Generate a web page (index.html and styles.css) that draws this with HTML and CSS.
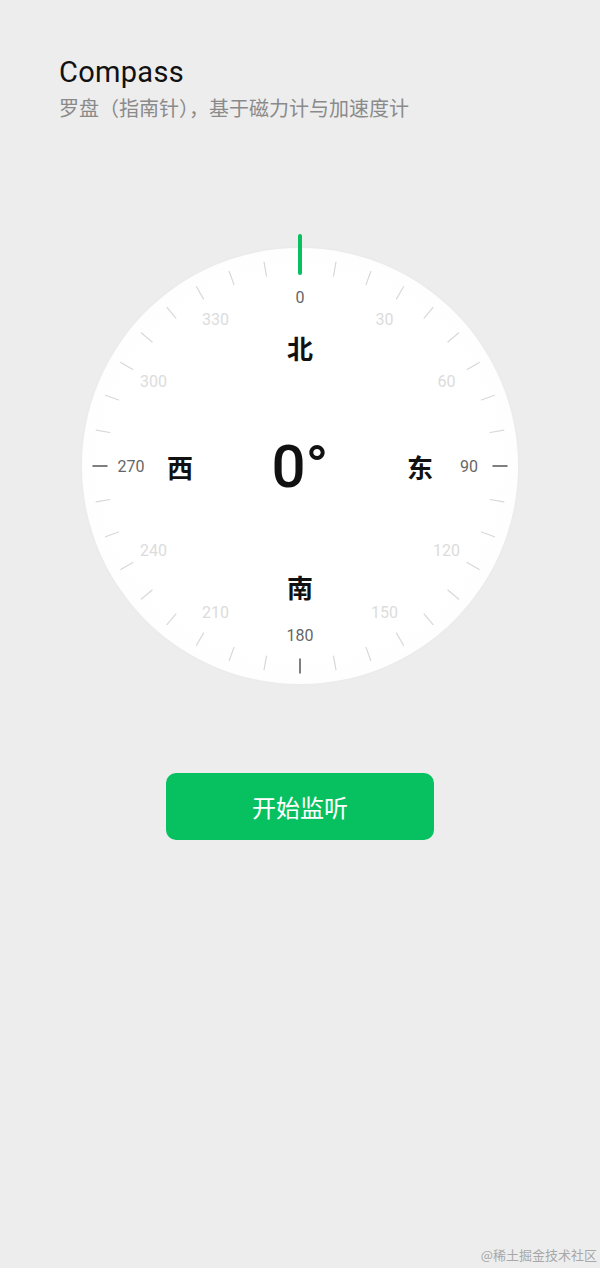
FILE: index.html
```html
<!DOCTYPE html>
<html lang="zh">
<head>
<meta charset="utf-8">
<title>Compass</title>
<link rel="stylesheet" href="styles.css">
</head>
<body>
<div class="page">
  <header class="header">
    <h1 class="title">Compass</h1>
    <p class="subtitle">罗盘（指南针），基于磁力计与加速度计</p>
  </header>
  <section class="dial-wrap">
    <div class="dial">
      <svg class="dial-svg" viewBox="-218 -218 436 436" width="436" height="436">
        <g class="ticks-minor" stroke="#d8d8d8" stroke-width="1.2" stroke-linecap="round">
          <line x1="0" y1="-193" x2="0" y2="-207" transform="rotate(10)"/>
          <line x1="0" y1="-193" x2="0" y2="-207" transform="rotate(20)"/>
          <line x1="0" y1="-193" x2="0" y2="-207" transform="rotate(30)"/>
          <line x1="0" y1="-193" x2="0" y2="-207" transform="rotate(40)"/>
          <line x1="0" y1="-193" x2="0" y2="-207" transform="rotate(50)"/>
          <line x1="0" y1="-193" x2="0" y2="-207" transform="rotate(60)"/>
          <line x1="0" y1="-193" x2="0" y2="-207" transform="rotate(70)"/>
          <line x1="0" y1="-193" x2="0" y2="-207" transform="rotate(80)"/>
          <line x1="0" y1="-193" x2="0" y2="-207" transform="rotate(100)"/>
          <line x1="0" y1="-193" x2="0" y2="-207" transform="rotate(110)"/>
          <line x1="0" y1="-193" x2="0" y2="-207" transform="rotate(120)"/>
          <line x1="0" y1="-193" x2="0" y2="-207" transform="rotate(130)"/>
          <line x1="0" y1="-193" x2="0" y2="-207" transform="rotate(140)"/>
          <line x1="0" y1="-193" x2="0" y2="-207" transform="rotate(150)"/>
          <line x1="0" y1="-193" x2="0" y2="-207" transform="rotate(160)"/>
          <line x1="0" y1="-193" x2="0" y2="-207" transform="rotate(170)"/>
          <line x1="0" y1="-193" x2="0" y2="-207" transform="rotate(190)"/>
          <line x1="0" y1="-193" x2="0" y2="-207" transform="rotate(200)"/>
          <line x1="0" y1="-193" x2="0" y2="-207" transform="rotate(210)"/>
          <line x1="0" y1="-193" x2="0" y2="-207" transform="rotate(220)"/>
          <line x1="0" y1="-193" x2="0" y2="-207" transform="rotate(230)"/>
          <line x1="0" y1="-193" x2="0" y2="-207" transform="rotate(240)"/>
          <line x1="0" y1="-193" x2="0" y2="-207" transform="rotate(250)"/>
          <line x1="0" y1="-193" x2="0" y2="-207" transform="rotate(260)"/>
          <line x1="0" y1="-193" x2="0" y2="-207" transform="rotate(280)"/>
          <line x1="0" y1="-193" x2="0" y2="-207" transform="rotate(290)"/>
          <line x1="0" y1="-193" x2="0" y2="-207" transform="rotate(300)"/>
          <line x1="0" y1="-193" x2="0" y2="-207" transform="rotate(310)"/>
          <line x1="0" y1="-193" x2="0" y2="-207" transform="rotate(320)"/>
          <line x1="0" y1="-193" x2="0" y2="-207" transform="rotate(330)"/>
          <line x1="0" y1="-193" x2="0" y2="-207" transform="rotate(340)"/>
          <line x1="0" y1="-193" x2="0" y2="-207" transform="rotate(350)"/>
        </g>
        <g class="ticks-major" stroke="#555" stroke-width="1.5" stroke-linecap="round">
          <line x1="0" y1="-193" x2="0" y2="-207" transform="rotate(90)"/>
          <line x1="0" y1="-193" x2="0" y2="-207" transform="rotate(180)"/>
          <line x1="0" y1="-193" x2="0" y2="-207" transform="rotate(270)"/>
        </g>
        <line class="needle" x1="0" y1="-230" x2="0" y2="-193"/>

        <g class="deg-minor">
          <text x="84.5" y="-146.4">30</text>
          <text x="146.4" y="-84.5">60</text>
          <text x="146.4" y="84.5">120</text>
          <text x="84.5" y="146.4">150</text>
          <text x="-84.5" y="146.4">210</text>
          <text x="-146.4" y="84.5">240</text>
          <text x="-146.4" y="-84.5">300</text>
          <text x="-84.5" y="-146.4">330</text>
        </g>
        <g class="deg-major">
          <text x="0" y="-169">0</text>
          <text x="169" y="0">90</text>
          <text x="0" y="169">180</text>
          <text x="-169" y="0">270</text>
        </g>
        <g class="cardinal">
          <text x="0" y="-119">北</text>
          <text x="120" y="0">东</text>
          <text x="0" y="120">南</text>
          <text x="-120" y="0">西</text>
        </g>
        <text class="heading" x="0" y="0">0°</text>
      </svg>
    </div>
  </section>
  <div class="actions">
    <button class="btn-primary" type="button">开始监听</button>
  </div>
  <footer class="watermark">@稀土掘金技术社区</footer>
</div>
</body>
</html>
```

FILE: styles.css
```css
* { box-sizing: border-box; }
html, body {
  margin: 0;
  padding: 0;
  background: #ededed;
}
body {
  font-family: Roboto, "Noto Sans", "Noto Sans CJK SC", sans-serif;
  color: #111;
}
.page {
  width: 600px;
  height: 1268px;
  display: flex;
  flex-direction: column;
}
.header {
  padding: 54px 59px 0;
}
.title {
  margin: 0;
  font-size: 29px;
  font-weight: 400;
  line-height: 36px;
  color: #111;
  letter-spacing: 0.3px;
}
.subtitle {
  margin: 5px 0 0;
  font-size: 20px;
  line-height: 26px;
  color: #8a8a8a;
  font-family: "Noto Sans CJK SC", sans-serif;
  white-space: nowrap;
}
.dial-wrap {
  display: flex;
  justify-content: center;
  margin-top: 127px;
}
.dial {
  width: 436px;
  height: 436px;
  border-radius: 50%;
  background: radial-gradient(circle at center, #ffffff 0%, #ffffff 62%, #fcfcfc 86%, #f6f6f6 100%);
  box-shadow: 0 0 4px rgba(0,0,0,0.025);
}
.dial-svg {
  display: block;
  overflow: visible;
}
.needle {
  stroke: #07c160;
  stroke-width: 4;
  stroke-linecap: round;
}
.deg-minor text, .deg-major text {
  font-family: Roboto, "Noto Sans", sans-serif;
  font-size: 16px;
  text-anchor: middle;
  dominant-baseline: central;
}
.deg-minor text { fill: #dcdcdc; }
.deg-major text { fill: #666; }
.cardinal text {
  font-family: "Noto Sans CJK SC", sans-serif;
  font-size: 26px;
  font-weight: 700;
  fill: #111;
  text-anchor: middle;
  dominant-baseline: central;
}
.heading {
  font-family: Roboto, "Noto Sans", sans-serif;
  font-size: 60px;
  font-weight: 500;
  fill: #111;
  text-anchor: middle;
  dominant-baseline: central;
}
.actions {
  display: flex;
  justify-content: center;
  margin-top: 89px;
}
.btn-primary {
  width: 268px;
  height: 67px;
  border: none;
  border-radius: 10px;
  background: #07c160;
  color: #fff;
  font-family: "Noto Sans CJK SC", sans-serif;
  font-size: 24px;
  font-weight: 400;
  cursor: pointer;
}
.watermark {
  margin-top: auto;
  align-self: flex-end;
  padding: 0 3px 4px 0;
  font-family: "Noto Sans CJK SC", serif;
  font-size: 13px;
  line-height: 18px;
  color: #a8a8a8;
}
```
